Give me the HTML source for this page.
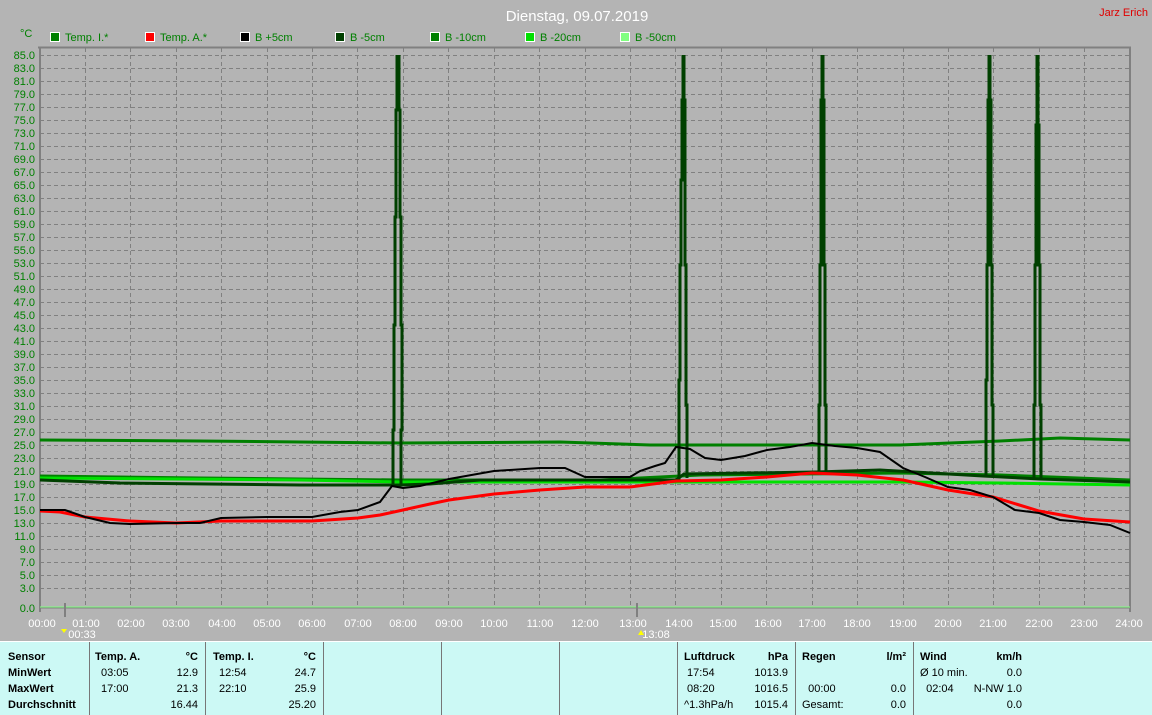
<!DOCTYPE html>
<html><head><meta charset="utf-8"><style>
body{margin:0;width:1152px;height:714px;background:#b4b4b4;font-family:"Liberation Sans",sans-serif;overflow:hidden;position:relative}
.p{position:absolute;left:0;top:641px;width:1152px;height:73px;background:#ccf9f5;border-top:1px solid #fff}
.d{position:absolute;top:0;width:1px;height:73px;background:#777}
.t{position:absolute;font-size:11px;color:#000;line-height:16px;white-space:nowrap}
.b{font-weight:bold}
.r{text-align:right}
</style></head><body>
<svg width="1152" height="641" style="position:absolute;left:0;top:0" font-family="Liberation Sans, sans-serif">
<text x="577" y="21" fill="#fff" font-size="15" text-anchor="middle">Dienstag, 09.07.2019</text>
<text x="1148" y="16" fill="#e00000" font-size="11" text-anchor="end">Jarz Erich</text>
<text x="20" y="37" fill="#008000" font-size="11">°C</text>
<g font-size="11">
<rect x="50.5" y="32.5" width="9" height="9" fill="#008000" stroke="#fff"/><text x="65" y="41" fill="#008000">Temp. I.*</text>
<rect x="145.5" y="32.5" width="9" height="9" fill="#ff0000" stroke="#fff"/><text x="160" y="41" fill="#008000">Temp. A.*</text>
<rect x="240.5" y="32.5" width="9" height="9" fill="#000" stroke="#fff"/><text x="255" y="41" fill="#008000">B +5cm</text>
<rect x="335.5" y="32.5" width="9" height="9" fill="#004000" stroke="#fff"/><text x="350" y="41" fill="#008000">B -5cm</text>
<rect x="430.5" y="32.5" width="9" height="9" fill="#008000" stroke="#fff"/><text x="445" y="41" fill="#008000">B -10cm</text>
<rect x="525.5" y="32.5" width="9" height="9" fill="#00e000" stroke="#fff"/><text x="540" y="41" fill="#008000">B -20cm</text>
<rect x="620.5" y="32.5" width="9" height="9" fill="#80ff80" stroke="#fff"/><text x="635" y="41" fill="#008000">B -50cm</text>
</g>
<line x1="38" y1="47.5" x2="1131" y2="47.5" stroke="#808080" stroke-width="2"/>
<g stroke="#808080" stroke-dasharray="4,3" stroke-width="1">
<path d="M40 55.5H1130M40 68.5H1130M40 81.5H1130M40 94.5H1130M40 107.5H1130M40 120.5H1130M40 133.5H1130M40 146.5H1130M40 159.5H1130M40 172.5H1130M40 185.5H1130M40 198.5H1130M40 211.5H1130M40 224.5H1130M40 237.5H1130M40 250.5H1130M40 263.5H1130M40 276.5H1130M40 289.5H1130M40 302.5H1130M40 315.5H1130M40 328.5H1130M40 341.5H1130M40 354.5H1130M40 367.5H1130M40 380.5H1130M40 393.5H1130M40 406.5H1130M40 419.5H1130M40 432.5H1130M40 445.5H1130M40 458.5H1130M40 471.5H1130M40 484.5H1130M40 497.5H1130M40 510.5H1130M40 523.5H1130M40 536.5H1130M40 549.5H1130M40 562.5H1130M40 575.5H1130M40 588.5H1130"/>
<path d="M85.5 48V607M130.5 48V607M176.5 48V607M221.5 48V607M267.5 48V607M312.5 48V607M357.5 48V607M403.5 48V607M448.5 48V607M494.5 48V607M539.5 48V607M585.5 48V607M630.5 48V607M675.5 48V607M721.5 48V607M766.5 48V607M812.5 48V607M857.5 48V607M903.5 48V607M948.5 48V607M993.5 48V607M1039.5 48V607M1084.5 48V607"/>
</g>
<line x1="40" y1="47" x2="40" y2="612" stroke="#808080" stroke-width="2"/>
<line x1="1130" y1="47" x2="1130" y2="612" stroke="#808080" stroke-width="2"/>
<line x1="40" y1="608" x2="1130" y2="608" stroke="#808080" stroke-width="1"/>
<line x1="40" y1="607" x2="1130" y2="607" stroke="#80ff80" stroke-width="1"/>
<g fill="#008000" font-size="11" text-anchor="end">
<text x="35" y="59">85.0</text><text x="35" y="72">83.0</text><text x="35" y="85">81.0</text><text x="35" y="98">79.0</text><text x="35" y="111">77.0</text><text x="35" y="124">75.0</text><text x="35" y="137">73.0</text><text x="35" y="150">71.0</text><text x="35" y="163">69.0</text><text x="35" y="176">67.0</text><text x="35" y="189">65.0</text><text x="35" y="202">63.0</text><text x="35" y="215">61.0</text><text x="35" y="228">59.0</text><text x="35" y="241">57.0</text><text x="35" y="254">55.0</text><text x="35" y="267">53.0</text><text x="35" y="280">51.0</text><text x="35" y="293">49.0</text><text x="35" y="306">47.0</text><text x="35" y="319">45.0</text><text x="35" y="332">43.0</text><text x="35" y="345">41.0</text><text x="35" y="358">39.0</text><text x="35" y="371">37.0</text><text x="35" y="384">35.0</text><text x="35" y="397">33.0</text><text x="35" y="410">31.0</text><text x="35" y="423">29.0</text><text x="35" y="436">27.0</text><text x="35" y="449">25.0</text><text x="35" y="462">23.0</text><text x="35" y="475">21.0</text><text x="35" y="488">19.0</text><text x="35" y="501">17.0</text><text x="35" y="514">15.0</text><text x="35" y="527">13.0</text><text x="35" y="540">11.0</text><text x="35" y="553">9.0</text><text x="35" y="566">7.0</text><text x="35" y="579">5.0</text><text x="35" y="592">3.0</text><text x="35" y="612">0.0</text>
</g>
<g fill="#fff" font-size="11" text-anchor="middle">
<text x="42" y="627">00:00</text><text x="86" y="627">01:00</text><text x="131" y="627">02:00</text><text x="176" y="627">03:00</text><text x="222" y="627">04:00</text><text x="267" y="627">05:00</text><text x="312" y="627">06:00</text><text x="358" y="627">07:00</text><text x="403" y="627">08:00</text><text x="449" y="627">09:00</text><text x="494" y="627">10:00</text><text x="540" y="627">11:00</text><text x="585" y="627">12:00</text><text x="633" y="627">13:00</text><text x="679" y="627">14:00</text><text x="723" y="627">15:00</text><text x="768" y="627">16:00</text><text x="812" y="627">17:00</text><text x="857" y="627">18:00</text><text x="903" y="627">19:00</text><text x="948" y="627">20:00</text><text x="993" y="627">21:00</text><text x="1039" y="627">22:00</text><text x="1084" y="627">23:00</text><text x="1129" y="627">24:00</text>
<text x="82" y="638">00:33</text><text x="656" y="638">13:08</text>
</g>
<line x1="65" y1="603" x2="65" y2="617" stroke="#808080" stroke-width="2"/>
<line x1="637" y1="603" x2="637" y2="617" stroke="#808080" stroke-width="2"/>
<path d="M61 629l3 4l3-4z" fill="#ff0"/><path d="M638 635l3-5l3 5z" fill="#ff0"/>
<g fill="none" stroke-width="3" stroke-linejoin="miter">
<polyline stroke="#008000" points="40,440 200,441 400,443 560,442 650,445 900,445 1000,441 1060,438 1130,440"/>
<polyline stroke="#008000" points="40,476 200,478 400,480 600,480 700,475 900,473 1000,475 1130,480"/>
<polyline stroke="#00e000" points="40,478 300,480 400,482 700,482 900,482 1000,483 1130,485"/>
<polyline stroke="#004000" points="40,480 120,483 300,485 400,485 430,484 480,480 676,480 684,474 816,472 880,470 983,476 1040,479 1130,482"/>
<path stroke="#004000" d="M393 485V430H394V325H395V217H396V110H397V55M399 55V110H400V217H401V325H402V430H401V485M679 480V380H680V265H681V180H682V100H683V55M684 55V100H685V265H686V405H687V478M819 472V405H820V265H821V100H822V55M823 55V100H824V265H825V405H826V472M986 476V380H987V265H988V100H989V55M990 55V100H991V265H992V405H993V476M1034 479V405H1035V265H1036V125H1037V55M1038 55V125H1039V265H1040V405H1041V479"/>
<polyline stroke="#ff0000" points="40,511 60,512 85,517 130,521 176,523 221,521 312,521 358,518 380,515 403,510 430,504 449,500 494,494 540,490 585,487 630,487 676,481 721,480 767,477 812,473 857,475 903,480 948,490 993,497 1039,511 1084,519 1130,522"/>
<polyline stroke="#000" stroke-width="2" points="40,510 65,510 85,517 110,523 130,524 176,523 200,523 221,518 267,517 312,517 340,512 358,510 380,502 392,486 403,488 420,486 449,479 494,471 540,468 565,468 585,477 630,477 640,471 655,466 665,463 676,447 690,449 705,458 721,460 745,456 767,450 790,447 812,443 835,446 857,448 880,452 903,468 925,477 948,487 970,490 993,497 1015,510 1039,513 1060,520 1084,522 1110,525 1130,533"/>
</g>
</svg>
<div class="p">
<div class="d" style="left:89px"></div><div class="d" style="left:205px"></div><div class="d" style="left:323px"></div><div class="d" style="left:441px"></div><div class="d" style="left:559px"></div><div class="d" style="left:677px"></div><div class="d" style="left:795px"></div><div class="d" style="left:913px"></div>
<div class="t b" style="left:8px;top:7px">Sensor<br>MinWert<br>MaxWert<br>Durchschnitt</div>
<div class="t b" style="left:95px;top:7px">Temp. A.</div><div class="t b r" style="left:150px;width:48px;top:7px">°C</div>
<div class="t" style="left:101px;top:23px">03:05<br>17:00</div><div class="t r" style="left:140px;width:58px;top:23px">12.9<br>21.3<br>16.44</div>
<div class="t b" style="left:213px;top:7px">Temp. I.</div><div class="t b r" style="left:270px;width:46px;top:7px">°C</div>
<div class="t" style="left:219px;top:23px">12:54<br>22:10</div><div class="t r" style="left:258px;width:58px;top:23px">24.7<br>25.9<br>25.20</div>
<div class="t b" style="left:684px;top:7px">Luftdruck</div><div class="t b r" style="left:740px;width:48px;top:7px">hPa</div>
<div class="t" style="left:684px;top:23px">&nbsp;17:54<br>&nbsp;08:20<br>^1.3hPa/h</div><div class="t r" style="left:730px;width:58px;top:23px">1013.9<br>1016.5<br>1015.4</div>
<div class="t b" style="left:802px;top:7px">Regen</div><div class="t b r" style="left:860px;width:46px;top:7px">l/m²</div>
<div class="t" style="left:802px;top:39px">&nbsp;&nbsp;00:00<br>Gesamt:</div><div class="t r" style="left:850px;width:56px;top:39px">0.0<br>0.0</div>
<div class="t b" style="left:920px;top:7px">Wind</div><div class="t b r" style="left:970px;width:52px;top:7px">km/h</div>
<div class="t" style="left:920px;top:23px">Ø 10 min.<br>&nbsp;&nbsp;02:04</div><div class="t r" style="left:950px;width:72px;top:23px">0.0<br>N-NW 1.0<br>0.0</div>
</div>
</body></html>
